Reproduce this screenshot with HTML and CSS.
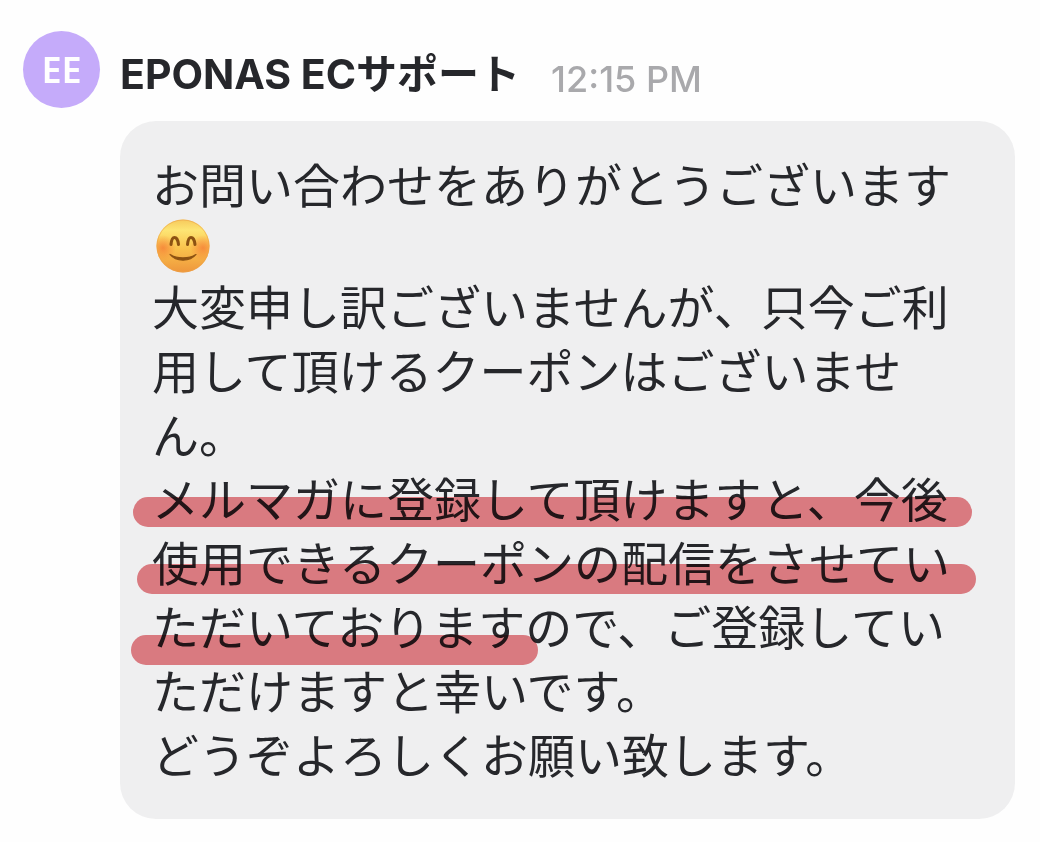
FILE: index.html
```html
<!DOCTYPE html>
<html lang="ja">
<head>
    <meta charset="UTF-8">
    <meta name="viewport" content="width=device-width, initial-scale=1.0">
    <title>EPONAS ECサポート</title>
    <link rel="stylesheet" href="styles.css">
</head>
<body>
    <article class="message">
        <!-- Sender -->
        <header class="message-header">
            <div class="avatar">EE</div>
            <h1 class="sender">EPONAS ECサポート</h1>
            <time class="time" datetime="12:15">12:15 PM</time>
        </header>

        <!-- Message text -->
        <div class="bubble">
            <p>お問い合わせをありがとうございます</p>
            <svg class="emoji" viewBox="0 0 54 54" role="img" aria-label="笑顔">
                <defs>
                    <linearGradient id="face" x1="0" y1="0" x2="0" y2="1">
                        <stop offset="0" stop-color="#f6c95c" />
                        <stop offset="0.2" stop-color="#fde574" />
                        <stop offset="0.55" stop-color="#fac24c" />
                        <stop offset="1" stop-color="#ee963c" />
                    </linearGradient>
                    <radialGradient id="cheek">
                        <stop offset="0" stop-color="#f6863a" stop-opacity="0.9" />
                        <stop offset="1" stop-color="#f6863a" stop-opacity="0" />
                    </radialGradient>
                    <clipPath id="head"><circle cx="27" cy="27" r="26.500" /></clipPath>
                </defs>
                <circle cx="27" cy="27" r="26.500" fill="url(#face)" />
                <g clip-path="url(#head)">
                    <circle cx="7" cy="29" r="13" fill="url(#cheek)" />
                    <circle cx="47" cy="29" r="13" fill="url(#cheek)" />
                </g>
                <circle cx="27" cy="27" r="26" fill="none" stroke="#eda24a" stroke-opacity="0.6" />
                <path d="M15 25.500C15.500 20.500 17 18.500 18.500 18.500S22 20.500 22.500 25.500M31.500 25.500C32 20.500 33.500 18.500 35 18.500S38.500 20.500 39 25.500" fill="none" stroke="#8c5212" stroke-width="3" stroke-linecap="round" />
                <path d="M14 35.500C20 43 34 43 40 35.500C33 40 21 40 14 35.500Z" fill="#8c5212" stroke="#8c5212" stroke-width="1.200" stroke-linejoin="round" />
            </svg>
            <p>大変申し訳ございませんが、只今ご利用して頂けるクーポンはございません。</p>
            <p>メルマガに登録して頂けますと、今後使用できるクーポンの配信をさせていただいておりますので、ご登録していただけますと幸いです。</p>
            <p>どうぞよろしくお願い致します。</p>

            <!-- Marker strokes over the text -->
            <span class="marker marker-first"></span>
            <span class="marker marker-second"></span>
            <span class="marker marker-third"></span>
        </div>
    </article>
</body>
</html>
```
FILE: styles.css
```css
* {
    box-sizing: border-box;
}

body {
    margin: 0;
    background-color: #fefefe;
    color: #26272b;
    font-family: Inter, "Noto Sans CJK JP", sans-serif;
}

.message {
    padding: 31px 25px 23px 23px;
}

.message-header {
    display: flex;
    align-items: center;
    height: 77px;
}

.avatar {
    display: flex;
    align-items: center;
    justify-content: center;
    width: 77px;
    height: 77px;
    margin-right: 20px;
    border-radius: 50%;
    background-color: #c5abfa;
    color: white;
    font-family: "Noto Sans", sans-serif;
    font-size: 36px;
    font-weight: 600;
}

.sender {
    margin: 0;
    padding-top: 8px;
    font-size: 41px;
    font-weight: 700;
    line-height: 64px;
}

.time {
    margin-left: 31px;
    padding-top: 18px;
    color: #a9a9ac;
    font-size: 36px;
    font-weight: 500;
    line-height: 40px;
}

.bubble {
    position: relative; /* Anchor for the marker strokes */
    margin: 13px 0 0 97px;
    padding: 30px 32px 34px;
    border-radius: 36px;
    background-color: #efeff0;
}

.bubble p {
    margin: 0;
    font-family: "Noto Sans CJK JP", sans-serif;
    font-size: 47px;
    line-height: 64px;
}

.emoji {
    display: block;
    width: 54px;
    height: 54px;
    margin: 4px 4px 0;
}

/* Red highlighter, the text stays readable through it */
.marker {
    position: absolute;
    height: 30px;
    border-radius: 15px;
    background-color: #e88288;
    mix-blend-mode: multiply;
}

.marker-first {
    top: 376px;
    left: 13px;
    right: 43px;
}

.marker-second {
    top: 443px;
    left: 17px;
    right: 39px;
}

.marker-third {
    top: 514px;
    left: 11px;
    width: 407px;
}
```
